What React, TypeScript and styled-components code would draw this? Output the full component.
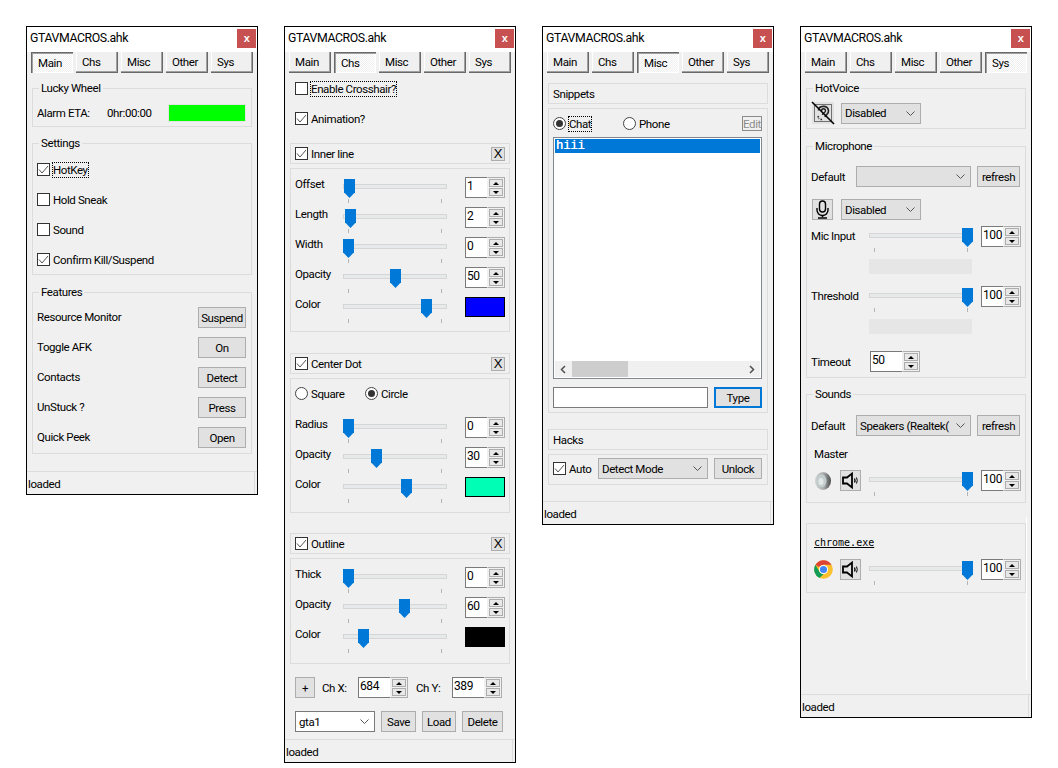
import React from "react";
import styled, { createGlobalStyle } from "styled-components";

const GlobalStyle = createGlobalStyle`
  html, body {
    margin: 0;
    background: #fff;
  }
  body {
    font-family: Roboto, "Liberation Sans", Arial, sans-serif;
    font-size: 11.5px;
    letter-spacing: -0.4px;
    color: #000;
  }
`;

const Desktop = styled.div`
  display: flex;
  align-items: flex-start;
  gap: 26px;
  padding: 26px;
`;

const Win = styled.div<{ $h: number }>`
  position: relative;
  width: 232px;
  height: ${(p) => p.$h}px;
  box-sizing: border-box;
  border: 1px solid #000;
  background: #f0f0f0;
  display: flex;
  flex-direction: column;
  flex: none;
`;

const TitleBar = styled.div`
  height: 25px;
  flex: none;
  background: #fff;
  display: flex;
  align-items: flex-start;
  justify-content: space-between;
  padding: 2px 1px 0 3px;
  box-sizing: border-box;
`;

const TitleText = styled.span`
  font-size: 12.3px;
  line-height: 19px;
`;

const CloseBtn = styled.div`
  width: 19px;
  height: 19px;
  background: #c75050;
  color: #fff;
  font-family: "Liberation Sans", sans-serif;
  font-size: 11px;
  font-weight: bold;
  line-height: 18px;
  text-align: center;
`;

const TabRow = styled.div`
  display: flex;
  gap: 3px;
  padding-left: 4px;
  height: 21px;
  flex: none;
`;

const Tab = styled.div<{ $active?: boolean }>`
  width: 42px;
  box-sizing: border-box;
  height: 21px;
  padding-left: ${(p) => (p.$active ? 7 : 6)}px;
  line-height: ${(p) => (p.$active ? 22 : 20)}px;
  background: ${(p) =>
    p.$active
      ? "repeating-conic-gradient(#fff 0 25%, #f0f0f0 0 50%) 0 0 / 2px 2px"
      : "#f0f0f0"};
  box-shadow: ${(p) =>
    p.$active
      ? "inset 1px 1px 0 #696969, inset 2px 2px 0 #a0a0a0, inset -1px -1px 0 #fff"
      : "inset -1px -1px 0 #696969, inset -2px -2px 0 #a0a0a0, inset 1px 0 0 #fff"};
`;

const Content = styled.div`
  flex: 1;
  display: flex;
  flex-direction: column;
  padding: 0 5px;
  min-height: 0;
`;

const Status = styled.div`
  position: relative;
  height: 23px;
  flex: none;
  border-top: 1px solid #dcdcdc;
  padding-left: 1px;
  line-height: 24px;
  box-sizing: border-box;
  &::after {
    content: "";
    position: absolute;
    right: 2px;
    top: 0;
    bottom: 0;
    width: 1px;
    background: #dcdcdc;
  }
`;

const Group = styled.div<{ $mt: number; $pt: number; $pb?: number; $gap?: number }>`
  position: relative;
  border: 1px solid #dcdcdc;
  margin-top: ${(p) => p.$mt}px;
  padding: ${(p) => p.$pt}px 5px ${(p) => p.$pb ?? 5}px 4px;
  display: flex;
  flex-direction: column;
  gap: ${(p) => p.$gap ?? 0}px;
`;

const Legend = styled.span`
  position: absolute;
  top: -8px;
  left: 6px;
  padding: 0 2px;
  line-height: 14px;
  background: #f0f0f0;
`;

const Header = styled.div<{ $mt: number }>`
  height: 21px;
  box-sizing: border-box;
  border: 1px solid #dcdcdc;
  margin-top: ${(p) => p.$mt}px;
  padding: 0 4px;
  display: flex;
  align-items: center;
  justify-content: space-between;
  flex: none;
`;

const Row = styled.div<{ $mt?: number; $gap?: number; $h?: number; $ml?: number }>`
  display: flex;
  align-items: center;
  flex: none;
  height: ${(p) => p.$h ?? 21}px;
  margin-top: ${(p) => p.$mt ?? 0}px;
  margin-left: ${(p) => p.$ml ?? 0}px;
  gap: ${(p) => p.$gap ?? 0}px;
`;

const SpreadRow = styled(Row)`
  justify-content: space-between;
`;

const TopRow = styled(Row)`
  align-items: flex-start;
`;

const Label = styled.span<{ $w?: number; $ml?: number; $mt?: number }>`
  flex: none;
  width: ${(p) => (p.$w ? `${p.$w}px` : "auto")};
  margin-left: ${(p) => p.$ml ?? 0}px;
  margin-top: ${(p) => p.$mt ?? 0}px;
  line-height: 14px;
  white-space: nowrap;
`;

const RowLabel = styled(Label)`
  padding-bottom: 2px;
`;

const CheckWrap = styled.span<{ $w?: number }>`
  display: inline-flex;
  align-items: center;
  gap: 3px;
  flex: none;
  width: ${(p) => (p.$w ? `${p.$w}px` : "auto")};
`;

const CheckBox = styled.span`
  width: 13px;
  height: 13px;
  box-sizing: border-box;
  border: 1px solid #333;
  background: #fff;
  display: block;
  flex: none;
`;

const RadioCircle = styled(CheckBox)`
  border-radius: 50%;
  border-color: #444;
  display: flex;
  align-items: center;
  justify-content: center;
`;

const RadioDot = styled.span`
  width: 7px;
  height: 7px;
  border-radius: 50%;
  background: #333;
`;

const CheckText = styled.span<{ $focus?: boolean }>`
  line-height: 14px;
  outline: ${(p) => (p.$focus ? "1px dotted #000" : "none")};
  white-space: nowrap;
`;

const Check = ({ label, on, focus, w }: { label: string; on?: boolean; focus?: boolean; w?: number }) => (
  <CheckWrap $w={w}>
    <CheckBox>
      {on && (
        <svg width="11" height="11" viewBox="0 0 11 11" fill="none" style={{ display: "block" }}>
          <path d="M1 5.500 L4 9 L10 2" stroke="#555" strokeWidth="1" />
        </svg>
      )}
    </CheckBox>
    <CheckText $focus={focus}>{label}</CheckText>
  </CheckWrap>
);

const Radio = ({ label, on, focus, w }: { label: string; on?: boolean; focus?: boolean; w?: number }) => (
  <CheckWrap $w={w}>
    <RadioCircle>{on && <RadioDot />}</RadioCircle>
    <CheckText $focus={focus}>{label}</CheckText>
  </CheckWrap>
);

const Btn = styled.div<{ $w: number; $h?: number; $focus?: boolean }>`
  width: ${(p) => p.$w}px;
  height: ${(p) => p.$h ?? 21}px;
  box-sizing: border-box;
  flex: none;
  background: #e1e1e1;
  border: ${(p) => (p.$focus ? "2px solid #0078d7" : "1px solid #adadad")};
  display: flex;
  align-items: center;
  justify-content: center;
  white-space: nowrap;
`;

const EditBtn = styled(Btn)`
  background: #f0f0f0;
  border-color: #8c8c8c;
  color: #8c8c8c;
`;

const CloseX = styled(Btn)`
  font-family: "Liberation Sans", sans-serif;
  font-size: 13px;
`;

const SliderBox = styled.div`
  position: relative;
  width: 104px;
  height: 21px;
  flex: none;
`;

const Track = styled.div`
  position: absolute;
  left: 0;
  right: 0;
  top: 7px;
  height: 5px;
  box-sizing: border-box;
  background: #e7eaea;
  border: 1px solid #d6d6d6;
`;

const Thumb = styled.div`
  position: absolute;
  top: 2px;
  width: 11px;
  height: 19px;
  background: #0078d7;
  clip-path: polygon(0 0, 100% 0, 100% 70%, 50% 100%, 0 70%);
`;

const Tick = styled.div<{ $at: number }>`
  position: absolute;
  top: 22px;
  left: ${(p) => p.$at}px;
  width: 1px;
  height: 4px;
  background: #b4b4b4;
`;

const Slider = ({ value }: { value: number }) => (
  <SliderBox>
    <Track />
    <Tick $at={5} />
    <Tick $at={98} />
    <Thumb style={{ left: Math.round((value / 100) * 93) }} />
  </SliderBox>
);

const SpinBox = styled.div<{ $w: number }>`
  display: flex;
  width: ${(p) => p.$w}px;
  height: 21px;
  flex: none;
`;

const SpinField = styled.div`
  flex: 1;
  box-sizing: border-box;
  background: #fff;
  border: 1px solid #7a7a7a;
  border-right: none;
  padding-left: 1px;
  line-height: 17px;
  font-size: 12px;
`;

const SpinBtns = styled.div`
  width: 18px;
  box-sizing: border-box;
  display: flex;
  flex-direction: column;
  gap: 1px;
  padding: 1px;
  border: 1px solid #adadad;
  border-left: 1px solid #f0f0f0;
  background: #f0f0f0;
`;

const SpinBtn = styled.div`
  flex: 1;
  background: #e8e8e8;
  border: 1px solid #adadad;
  display: flex;
  align-items: center;
  justify-content: center;
`;

const Arrow = styled.span<{ $down?: boolean }>`
  width: 0;
  height: 0;
  border-left: 3px solid transparent;
  border-right: 3px solid transparent;
  border-bottom: ${(p) => (p.$down ? "0" : "3px solid #000")};
  border-top: ${(p) => (p.$down ? "3px solid #000" : "0")};
`;

const Spin = ({ value, w = 40 }: { value: number; w?: number }) => (
  <SpinBox $w={w}>
    <SpinField>{value}</SpinField>
    <SpinBtns>
      <SpinBtn>
        <Arrow />
      </SpinBtn>
      <SpinBtn>
        <Arrow $down />
      </SpinBtn>
    </SpinBtns>
  </SpinBox>
);

const Swatch = styled.div<{ $color: string }>`
  width: 40px;
  height: 20px;
  margin-bottom: 1px;
  box-sizing: border-box;
  border: 1px solid #000;
  background: ${(p) => p.$color};
  flex: none;
`;

const SelectBox = styled.div<{ $w: number; $white?: boolean }>`
  width: ${(p) => p.$w}px;
  height: 21px;
  box-sizing: border-box;
  flex: none;
  background: ${(p) => (p.$white ? "#fff" : "#e1e1e1")};
  border: 1px solid ${(p) => (p.$white ? "#7a7a7a" : "#adadad")};
  display: flex;
  align-items: center;
  justify-content: space-between;
  padding: 0 5px 0 3px;
  white-space: nowrap;
  overflow: hidden;
`;

const Select = ({ w, value, white }: { w: number; value?: string; white?: boolean }) => (
  <SelectBox $w={w} $white={white}>
    <span>{value}</span>
    <svg width="9" height="5" viewBox="0 0 9 5" fill="none" style={{ flex: "none" }}>
      <path d="M0.500 0.500 L4.500 4.500 L8.500 0.500" stroke="#555" />
    </svg>
  </SelectBox>
);

const GreenBar = styled.div`
  width: 78px;
  height: 18px;
  box-sizing: border-box;
  border: 1px solid #e4e4e4;
  background: #00ff00;
  flex: none;
`;

const ListBox = styled.div`
  height: 242px;
  box-sizing: border-box;
  border: 1px solid #828790;
  background: #fff;
  margin-top: 3px;
  padding: 1px;
  display: flex;
  flex-direction: column;
  font-family: "Liberation Mono", monospace;
  font-size: 12px;
  letter-spacing: 0;
  flex: none;
`;

const ListItem = styled.div`
  height: 14px;
  background: #0078d7;
  color: #fff;
  line-height: 14px;
  padding-left: 1px;
  text-shadow: 0.2px 0 0 #fff;
`;

const HScroll = styled.div`
  margin-top: auto;
  height: 16px;
  background: #f0f0f0;
  display: flex;
  align-items: center;
  padding: 0 5px;
`;

const ScrollThumb = styled.div`
  width: 56px;
  height: 16px;
  background: #cdcdcd;
  margin: 0 auto 0 6px;
`;

const TextInput = styled.div`
  width: 155px;
  height: 21px;
  box-sizing: border-box;
  border: 1px solid #7a7a7a;
  background: #fff;
  flex: none;
`;

const LevelBar = styled.div<{ $mt: number }>`
  width: 103px;
  height: 15px;
  margin: ${(p) => p.$mt}px 0 0 58px;
  background: #e6e6e6;
  flex: none;
`;

const IconBox = styled.div`
  width: 22px;
  height: 22px;
  flex: none;
  margin-left: 1px;
  background: #e1e1e1;
  overflow: visible;
`;

const MonoLink = styled.span`
  font-family: "DejaVu Sans Mono", monospace;
  font-size: 10px;
  letter-spacing: 0;
  text-decoration: underline;
`;

const Sliver = styled.div`
  position: absolute;
  right: 4px;
  top: 490px;
  width: 1px;
  height: 163px;
  background: #fff;
`;

const Tabs = ({ active }: { active: number }) => (
  <TabRow>
    {["Main", "Chs", "Misc", "Other", "Sys"].map((t, i) => (
      <Tab key={t} $active={i === active}>
        {t}
      </Tab>
    ))}
  </TabRow>
);

const Window = ({ h, active, children }: { h: number; active: number; children: React.ReactNode }) => (
  <Win $h={h}>
    <TitleBar>
      <TitleText>GTAVMACROS.ahk</TitleText>
      <CloseBtn>x</CloseBtn>
    </TitleBar>
    <Tabs active={active} />
    <Content>{children}</Content>
    <Status>loaded</Status>
  </Win>
);

const SliderRow = ({ label, value, spin, color }: { label: string; value: number; spin?: number; color?: string }) => (
  <TopRow>
    <Label $w={48}>{label}</Label>
    <Slider value={value} />
    <Row $ml={18}>{color ? <Swatch $color={color} /> : <Spin value={spin ?? 0} />}</Row>
  </TopRow>
);

const WideSliderRow = ({ label, mt }: { label: string; mt: number }) => (
  <TopRow $mt={mt}>
    <Label $w={58} $mt={3}>
      {label}
    </Label>
    <Slider value={100} />
    <Row $ml={8}>
      <Spin value={100} />
    </Row>
  </TopRow>
);

const SpeakerIcon = () => (
  <svg width="19" height="19" viewBox="0 0 19 19" fill="none" style={{ flex: "none" }}>
    <path d="M2 6.500 H6 L11 2.500 V16.500 L6 12.500 H2 Z" stroke="#000" strokeWidth="1.800" />
    <path d="M13.500 7.500 Q14.500 9.500 13.500 11.500" stroke="#000" strokeWidth="1.300" />
    <path d="M15.500 6.500 Q17 9.500 15.500 12.500" stroke="#000" strokeWidth="1" />
  </svg>
);

const MasterIcon = () => (
  <svg width="18" height="18" viewBox="0 0 18 18" style={{ flex: "none" }}>
    <defs>
      <linearGradient id="cone" x1="0" x2="1" y1="0" y2="0">
        <stop offset="0" stopColor="#d0d4d4" />
        <stop offset="0.55" stopColor="#a8acac" />
        <stop offset="1" stopColor="#4c4c4c" />
      </linearGradient>
    </defs>
    <ellipse cx="9" cy="9" rx="8" ry="9" fill="url(#cone)" />
    <ellipse cx="7.500" cy="9" rx="5" ry="6.500" fill="#c3cccc" />
    <ellipse cx="7" cy="9.500" rx="2.500" ry="3.500" fill="#e2e8e8" />
  </svg>
);

const ChromeIcon = () => (
  <svg width="19" height="19" viewBox="0 0 48 48" style={{ flex: "none" }}>
    <circle cx="24" cy="24" r="23.500" fill="#fbc02d" />
    <path d="M24 .5a23.500 23.500 0 0 1 20.400 11.800H24a11.700 11.700 0 0 0-10.200 5.900L3.600 12.300A23.500 23.500 0 0 1 24 .5z" fill="#db4437" />
    <path d="M3.600 12.300l10.200 17.600a11.700 11.700 0 0 0 10.200 5.800L13.800 45.500A23.500 23.500 0 0 1 3.600 12.300z" fill="#0f9d58" />
    <circle cx="24" cy="24" r="11.500" fill="#fff" />
    <circle cx="24" cy="24" r="9" fill="#4285f4" />
  </svg>
);

const EarIcon = () => (
  <svg width="24" height="24" viewBox="0 0 24 24" fill="none" style={{ display: "block", margin: "-1px" }}>
    <rect x="3.500" y="3.500" width="17" height="17" stroke="#000" strokeDasharray="1 1" />
    <path d="M7.500 9.500 C7.500 4.500 16.500 3.500 17.500 9.500 C18 13 14.500 13.500 14 16" stroke="#222" strokeWidth="1.600" />
    <path d="M10.500 10 C10.500 7 14.500 7 14.500 10 C14.500 12 11.500 11.500 11.500 14" stroke="#222" strokeWidth="1.400" />
    <path d="M7 15 L8 18 M9.500 18.500 H12" stroke="#222" strokeWidth="1.500" strokeDasharray="1.500 1" />
    <path d="M1 1 L23 23" stroke="#000" strokeWidth="1.600" />
  </svg>
);

const MicIcon = () => (
  <svg width="19" height="19" viewBox="0 0 19 19" fill="none" style={{ flex: "none" }}>
    <rect x="6.500" y="1" width="6" height="11" rx="3" stroke="#000" strokeWidth="1.400" />
    <path d="M4 8 V10 A5.500 5.500 0 0 0 15 10 V8" stroke="#000" strokeWidth="1.400" />
    <path d="M9.500 15 V17 M5 18 H14" stroke="#000" strokeWidth="1.600" />
  </svg>
);

const MainWindow = () => (
  <Window h={469} active={0}>
    <Group $mt={15} $pt={15} $pb={4}>
      <Legend>Lucky Wheel</Legend>
      <Row $h={18}>
        <Label $w={70}>Alarm ETA:</Label>
        <Label $w={61}>0hr:00:00</Label>
        <GreenBar />
      </Row>
    </Group>
    <Group $mt={16} $pt={15} $pb={4} $gap={9}>
      <Legend>Settings</Legend>
      <Row>
        <Check label="HotKey" on focus />
      </Row>
      <Row>
        <Check label="Hold Sneak" />
      </Row>
      <Row>
        <Check label="Sound" />
      </Row>
      <Row>
        <Check label="Confirm Kill/Suspend" on />
      </Row>
    </Group>
    <Group $mt={17} $pt={14} $pb={5} $gap={9}>
      <Legend>Features</Legend>
      {[
        ["Resource Monitor", "Suspend"],
        ["Toggle AFK", "On"],
        ["Contacts", "Detect"],
        ["UnStuck ?", "Press"],
        ["Quick Peek", "Open"],
      ].map(([label, action]) => (
        <SpreadRow key={label}>
          <RowLabel>{label}</RowLabel>
          <Btn $w={48}>{action}</Btn>
        </SpreadRow>
      ))}
    </Group>
  </Window>
);

const ChsWindow = () => (
  <Window h={737} active={1}>
    <Row $mt={5} $ml={5}>
      <Check label="Enable Crosshair?" focus />
    </Row>
    <Row $mt={9} $ml={5}>
      <Check label="Animation?" on />
    </Row>
    <Header $mt={14}>
      <Check label="Inner line" on />
      <CloseX $w={14} $h={14}>
        X
      </CloseX>
    </Header>
    <Group $mt={4} $pt={8} $pb={13} $gap={9}>
      <SliderRow label="Offset" value={1} spin={1} />
      <SliderRow label="Length" value={2} spin={2} />
      <SliderRow label="Width" value={0} spin={0} />
      <SliderRow label="Opacity" value={50} spin={50} />
      <SliderRow label="Color" value={84} color="#0000ff" />
    </Group>
    <Header $mt={21}>
      <Check label="Center Dot" on />
      <CloseX $w={14} $h={14}>
        X
      </CloseX>
    </Header>
    <Group $mt={4} $pt={4} $pb={14} $gap={9}>
      <Row>
        <Radio label="Square" w={70} />
        <Radio label="Circle" on />
      </Row>
      <TopRow $mt={4}>
        <Label $w={48}>Radius</Label>
        <Slider value={0} />
        <Row $ml={18}>
          <Spin value={0} />
        </Row>
      </TopRow>
      <SliderRow label="Opacity" value={30} spin={30} />
      <SliderRow label="Color" value={62} color="#00ffb4" />
    </Group>
    <Header $mt={20}>
      <Check label="Outline" on />
      <CloseX $w={14} $h={14}>
        X
      </CloseX>
    </Header>
    <Group $mt={4} $pt={8} $pb={15} $gap={9}>
      <SliderRow label="Thick" value={0} spin={0} />
      <SliderRow label="Opacity" value={60} spin={60} />
      <SliderRow label="Color" value={16} color="#000000" />
    </Group>
    <Row $mt={13} $ml={5}>
      <Btn $w={20}>+</Btn>
      <Label $w={36} $ml={7}>
        Ch X:
      </Label>
      <Spin value={684} w={50} />
      <Label $w={36} $ml={8}>
        Ch Y:
      </Label>
      <Spin value={389} w={50} />
    </Row>
    <Row $mt={13} $ml={5} $gap={6}>
      <Select w={80} value="gta1" white />
      <Btn $w={35}>Save</Btn>
      <Btn $w={34}>Load</Btn>
      <Btn $w={41}>Delete</Btn>
    </Row>
  </Window>
);

const MiscWindow = () => (
  <Window h={499} active={2}>
    <Header $mt={10}>
      <span>Snippets</span>
    </Header>
    <Group $mt={4} $pt={4} $pb={4}>
      <SpreadRow>
        <Row>
          <Radio label="Chat" on focus w={70} />
          <Radio label="Phone" />
        </Row>
        <EditBtn $w={20} $h={15}>
          Edit
        </EditBtn>
      </SpreadRow>
      <ListBox>
        <ListItem>hiii</ListItem>
        <HScroll>
          <svg width="6" height="9" viewBox="0 0 6 9" fill="none">
            <path d="M5 1 L1.500 4.500 L5 8" stroke="#505050" strokeWidth="1.500" />
          </svg>
          <ScrollThumb />
          <svg width="6" height="9" viewBox="0 0 6 9" fill="none">
            <path d="M1 1 L4.500 4.500 L1 8" stroke="#505050" strokeWidth="1.500" />
          </svg>
        </HScroll>
      </ListBox>
      <Row $mt={8} $gap={6}>
        <TextInput />
        <Btn $w={48} $focus>
          Type
        </Btn>
      </Row>
    </Group>
    <Header $mt={16}>
      <span>Hacks</span>
    </Header>
    <Group $mt={4} $pt={3} $pb={5}>
      <Row>
        <Check label="Auto" on w={45} />
        <Row $gap={6}>
          <Select w={110} value="Detect Mode" />
          <Btn $w={48}>Unlock</Btn>
        </Row>
      </Row>
    </Group>
  </Window>
);

const SysWindow = () => (
  <Window h={692} active={4}>
    <Group $mt={15} $pt={13} $pb={4}>
      <Legend>HotVoice</Legend>
      <Row $h={22} $gap={7}>
        <IconBox>
          <EarIcon />
        </IconBox>
        <Select w={80} value="Disabled" />
      </Row>
    </Group>
    <Group $mt={17} $pt={19} $pb={5}>
      <Legend>Microphone</Legend>
      <Row $gap={6}>
        <Label $w={39}>Default</Label>
        <Select w={115} />
        <Btn $w={43}>refresh</Btn>
      </Row>
      <Row $mt={12} $ml={1} $gap={8}>
        <Btn $w={21}>
          <MicIcon />
        </Btn>
        <Select w={80} value="Disabled" />
      </Row>
      <WideSliderRow label="Mic Input" mt={6} />
      <LevelBar $mt={12} />
      <WideSliderRow label="Threshold" mt={12} />
      <LevelBar $mt={12} />
      <Row $mt={17}>
        <Label $w={59}>Timeout</Label>
        <Spin value={50} w={50} />
      </Row>
    </Group>
    <Group $mt={16} $pt={20} $pb={11}>
      <Legend>Sounds</Legend>
      <Row $gap={6}>
        <Label $w={39}>Default</Label>
        <Select w={115} value="Speakers (Realtek(" />
        <Btn $w={43}>refresh</Btn>
      </Row>
      <Row $h={20} $mt={8} $ml={3}>
        <Label>Master</Label>
      </Row>
      <Row $mt={6} $ml={3}>
        <MasterIcon />
        <Row $ml={8}>
          <Btn $w={21}>
            <SpeakerIcon />
          </Btn>
        </Row>
        <Row $ml={8}>
          <Slider value={100} />
        </Row>
        <Row $ml={8}>
          <Spin value={100} />
        </Row>
      </Row>
    </Group>
    <Group $mt={20} $pt={8} $pb={12}>
      <Row $h={20} $ml={3}>
        <MonoLink>chrome.exe</MonoLink>
      </Row>
      <Row $mt={7} $ml={3}>
        <ChromeIcon />
        <Row $ml={7}>
          <Btn $w={21}>
            <SpeakerIcon />
          </Btn>
        </Row>
        <Row $ml={8}>
          <Slider value={100} />
        </Row>
        <Row $ml={8}>
          <Spin value={100} />
        </Row>
      </Row>
    </Group>
    <Sliver />
  </Window>
);

const App: React.FC = () => (
  <>
    <GlobalStyle />
    <Desktop>
      <MainWindow />
      <ChsWindow />
      <MiscWindow />
      <SysWindow />
    </Desktop>
  </>
);

export default App;
